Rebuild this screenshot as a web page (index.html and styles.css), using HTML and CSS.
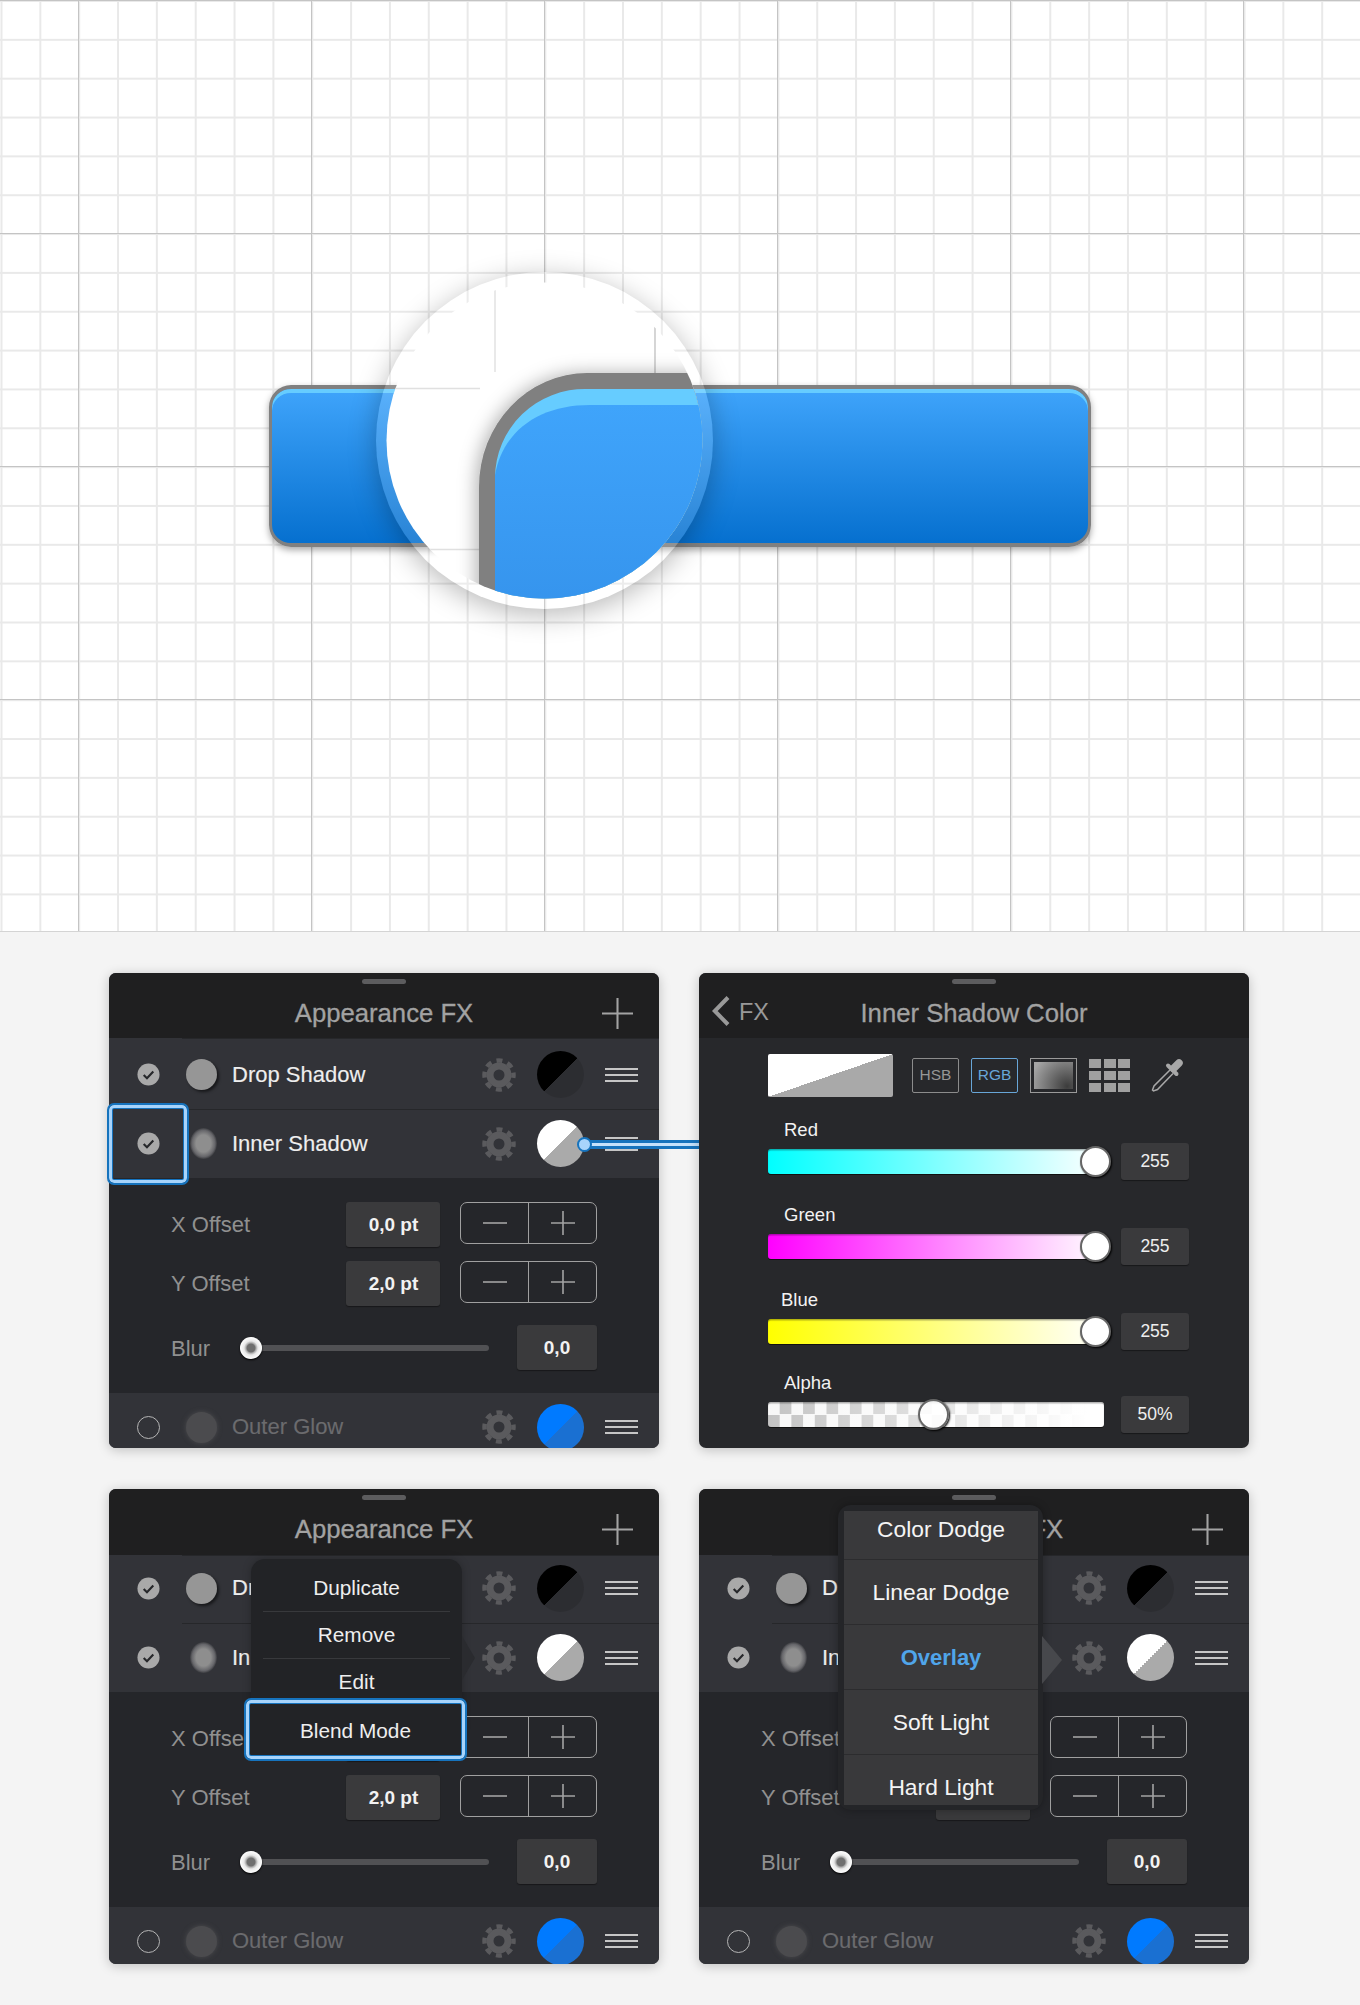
FILE: index.html
```html
<!DOCTYPE html>
<html>
<head>
    <title>Inner Shadow Button Tutorial</title>
    <link rel="stylesheet" href="styles.css">
</head>
<body>
    <svg class="sprite">
        <symbol id="gear" viewBox="0 0 34 34">
            <circle cx="17" cy="17" r="9" fill="none" stroke="#5a5a5d" stroke-width="7"/>
            <circle cx="17" cy="17" r="14.5" fill="none" stroke="#5a5a5d" stroke-width="4.5" stroke-dasharray="6 5.39" stroke-dashoffset="3"/>
        </symbol>
        <symbol id="check" viewBox="0 0 24 24">
            <circle cx="12" cy="12" r="11.5" fill="#a9a9a9"/>
            <path d="M7 12.5l3.4 3.4L17 8.8" fill="none" stroke="#26272a" stroke-width="2.2"/>
        </symbol>
        <symbol id="plus" viewBox="0 0 24 24">
            <path d="M12 0v24M0 12h24" fill="none" stroke="#a3a3a3" stroke-width="1.6"/>
        </symbol>
        <symbol id="minus" viewBox="0 0 24 24">
            <path d="M0 12h24" fill="none" stroke="#a3a3a3" stroke-width="1.6"/>
        </symbol>
    </svg>

    <!-- artboard with the zoomed button -->
    <section class="stage">
        <div class="big-button"></div>
        <div class="lens">
            <svg viewBox="376 272 337 337" width="337" height="337">
                <defs>
                    <clipPath id="lensClip"><circle cx="544.5" cy="440.5" r="158"/></clipPath>
                    <linearGradient id="lensBlue" x1="0" y1="0" x2="0" y2="1">
                        <stop offset="0" stop-color="#3fa4fb"/>
                        <stop offset="1" stop-color="#3593ec"/>
                    </linearGradient>
                    <filter id="lensShadow" x="-30%" y="-30%" width="160%" height="160%">
                        <feDropShadow dx="-3" dy="0" stdDeviation="9" flood-color="#000" flood-opacity="0.3"/>
                    </filter>
                </defs>
                <g clip-path="url(#lensClip)">
                    <rect x="376" y="272" width="337" height="337" fill="#fff"/>
                    <path d="M386 388.5H480M495 288V372M396 549.5H480" stroke="#e0e0e0" stroke-width="1.4"/>
                    <path d="M655 324V373" stroke="#c4c4c4" stroke-width="1.4"/>
                    <path d="M479 620V487A108 114 0 0 1 587 373H720V620Z" fill="#808080" filter="url(#lensShadow)"/>
                    <path d="M495 620V478A90 89 0 0 1 587 389H720V620Z" fill="#66ccff"/>
                    <path d="M495 620V475C503 430 540 405 590 405H720V620Z" fill="url(#lensBlue)"/>
                </g>
            </svg>
        </div>
    </section>

    <main class="boards">

        <!-- appearance panel, inner shadow selected -->
        <div class="panel">
            <div class="panel-head">
                <span class="grip"></span>
                <h2 class="panel-title">Appearance FX</h2>
                <svg class="head-plus"><use href="#plus"/></svg>
            </div>
            <div class="fx-row fx-row--first">
                <svg class="fx-check"><use href="#check"/></svg>
                <span class="fx-dot"></span>
                <span class="fx-label">Drop Shadow</span>
                <svg class="fx-gear"><use href="#gear"/></svg>
                <span class="fx-swatch fx-swatch--black"></span>
                <span class="fx-lines"></span>
            </div>
            <div class="fx-row fx-row--second">
                <svg class="fx-check"><use href="#check"/></svg>
                <span class="fx-dot fx-dot--inner"></span>
                <span class="fx-label">Inner Shadow</span>
                <svg class="fx-gear"><use href="#gear"/></svg>
                <span class="fx-swatch fx-swatch--white"></span>
                <span class="fx-lines"></span>
            </div>
            <div class="fx-detail">
                <div class="offset-row">
                    <span class="offset-label">X Offset</span>
                    <span class="value-box">0,0 pt</span>
                    <div class="stepper">
                        <span class="step"><svg class="step-icon"><use href="#minus"/></svg></span>
                        <span class="step"><svg class="step-icon"><use href="#plus"/></svg></span>
                    </div>
                </div>
                <div class="offset-row">
                    <span class="offset-label">Y Offset</span>
                    <span class="value-box">2,0 pt</span>
                    <div class="stepper">
                        <span class="step"><svg class="step-icon"><use href="#minus"/></svg></span>
                        <span class="step"><svg class="step-icon"><use href="#plus"/></svg></span>
                    </div>
                </div>
                <div class="blur-row">
                    <span class="blur-label">Blur</span>
                    <div class="blur-track"><span class="blur-thumb"></span></div>
                    <span class="value-box value-box--blur">0,0</span>
                </div>
            </div>
            <div class="foot-clip">
                <div class="fx-row fx-row--foot">
                    <span class="fx-check fx-check--off"></span>
                    <span class="fx-dot fx-dot--off"></span>
                    <span class="fx-label fx-label--off">Outer Glow</span>
                    <svg class="fx-gear"><use href="#gear"/></svg>
                    <span class="fx-swatch fx-swatch--blue"></span>
                    <span class="fx-lines"></span>
                </div>
            </div>
            <span class="focus-ring focus-ring--check"></span>
            <span class="link-line"></span>
            <span class="link-dot"></span>
        </div>

        <!-- color panel -->
        <div class="panel panel--color">
            <div class="panel-head">
                <span class="grip"></span>
                <a class="back-link" href="#">
                    <svg class="back-icon" viewBox="0 0 18 30"><path d="M16 1.500L2.800 15l13.200 13.500" fill="none" stroke="#999" stroke-width="4"/></svg>
                    <span>FX</span>
                </a>
                <h2 class="panel-title">Inner Shadow Color</h2>
            </div>
            <div class="color-body">
                <div class="color-tools">
                    <span class="color-preview"></span>
                    <span class="mode-btn">HSB</span>
                    <span class="mode-btn mode-btn--on">RGB</span>
                    <span class="mode-picker"><span class="mode-picker-fill"></span></span>
                    <span class="mode-grid">
                        <i></i><i></i><i></i><i></i><i></i><i></i><i></i><i></i><i></i>
                    </span>
                    <svg class="dropper" viewBox="0 0 35 35">
                        <path d="M24.500 10.500L30 5" stroke="#a8a8a8" stroke-width="7.500" stroke-linecap="round"/>
                        <path d="M19 7.500L27.500 16" stroke="#a8a8a8" stroke-width="4" stroke-linecap="round"/>
                        <path d="M21 12L5 28l-1.500 4 1 1 4-1.500L24 15.500" fill="none" stroke="#a8a8a8" stroke-width="1.500"/>
                    </svg>
                </div>

                <div class="channel">
                    <span class="channel-name">Red</span>
                    <div class="channel-row">
                        <div class="channel-track channel-track--red"><span class="channel-thumb"></span></div>
                        <span class="channel-value">255</span>
                    </div>
                </div>
                <div class="channel">
                    <span class="channel-name">Green</span>
                    <div class="channel-row">
                        <div class="channel-track channel-track--green"><span class="channel-thumb"></span></div>
                        <span class="channel-value">255</span>
                    </div>
                </div>
                <div class="channel channel--blue">
                    <span class="channel-name">Blue</span>
                    <div class="channel-row">
                        <div class="channel-track channel-track--blue"><span class="channel-thumb"></span></div>
                        <span class="channel-value">255</span>
                    </div>
                </div>
                <div class="channel">
                    <span class="channel-name">Alpha</span>
                    <div class="channel-row">
                        <div class="channel-track channel-track--alpha"><span class="channel-thumb channel-thumb--half"></span></div>
                        <span class="channel-value">50%</span>
                    </div>
                </div>
            </div>
        </div>

        <!-- appearance panel with context menu -->
        <div class="panel panel--low">
            <div class="panel-head">
                <span class="grip"></span>
                <h2 class="panel-title">Appearance FX</h2>
                <svg class="head-plus"><use href="#plus"/></svg>
            </div>
            <div class="fx-row fx-row--first">
                <svg class="fx-check"><use href="#check"/></svg>
                <span class="fx-dot"></span>
                <span class="fx-label">Drop Shadow</span>
                <svg class="fx-gear"><use href="#gear"/></svg>
                <span class="fx-swatch fx-swatch--black"></span>
                <span class="fx-lines"></span>
            </div>
            <div class="fx-row fx-row--second">
                <svg class="fx-check"><use href="#check"/></svg>
                <span class="fx-dot fx-dot--inner"></span>
                <span class="fx-label">Inner Shadow</span>
                <svg class="fx-gear"><use href="#gear"/></svg>
                <span class="fx-swatch fx-swatch--white"></span>
                <span class="fx-lines"></span>
            </div>
            <div class="fx-detail">
                <div class="offset-row">
                    <span class="offset-label">X Offset</span>
                    <span class="value-box">0,0 pt</span>
                    <div class="stepper">
                        <span class="step"><svg class="step-icon"><use href="#minus"/></svg></span>
                        <span class="step"><svg class="step-icon"><use href="#plus"/></svg></span>
                    </div>
                </div>
                <div class="offset-row">
                    <span class="offset-label">Y Offset</span>
                    <span class="value-box">2,0 pt</span>
                    <div class="stepper">
                        <span class="step"><svg class="step-icon"><use href="#minus"/></svg></span>
                        <span class="step"><svg class="step-icon"><use href="#plus"/></svg></span>
                    </div>
                </div>
                <div class="blur-row">
                    <span class="blur-label">Blur</span>
                    <div class="blur-track"><span class="blur-thumb"></span></div>
                    <span class="value-box value-box--blur">0,0</span>
                </div>
            </div>
            <div class="foot-clip">
                <div class="fx-row fx-row--foot">
                    <span class="fx-check fx-check--off"></span>
                    <span class="fx-dot fx-dot--off"></span>
                    <span class="fx-label fx-label--off">Outer Glow</span>
                    <svg class="fx-gear"><use href="#gear"/></svg>
                    <span class="fx-swatch fx-swatch--blue"></span>
                    <span class="fx-lines"></span>
                </div>
            </div>
            <div class="context-menu">
                <div class="context-item">Duplicate</div>
                <div class="context-item">Remove</div>
                <div class="context-item">Edit</div>
            </div>
            <div class="focus-ring focus-ring--menu">Blend Mode</div>
        </div>

        <!-- appearance panel with blend mode list -->
        <div class="panel panel--low">
            <div class="panel-head">
                <span class="grip"></span>
                <h2 class="panel-title">Appearance FX</h2>
                <svg class="head-plus"><use href="#plus"/></svg>
            </div>
            <div class="fx-row fx-row--first">
                <svg class="fx-check"><use href="#check"/></svg>
                <span class="fx-dot"></span>
                <span class="fx-label">Drop Shadow</span>
                <svg class="fx-gear"><use href="#gear"/></svg>
                <span class="fx-swatch fx-swatch--black"></span>
                <span class="fx-lines"></span>
            </div>
            <div class="fx-row fx-row--second">
                <svg class="fx-check"><use href="#check"/></svg>
                <span class="fx-dot fx-dot--inner"></span>
                <span class="fx-label">Inner Shadow</span>
                <svg class="fx-gear"><use href="#gear"/></svg>
                <span class="fx-swatch fx-swatch--white"></span>
                <span class="fx-lines"></span>
            </div>
            <div class="fx-detail">
                <div class="offset-row">
                    <span class="offset-label">X Offset</span>
                    <span class="value-box">0,0 pt</span>
                    <div class="stepper">
                        <span class="step"><svg class="step-icon"><use href="#minus"/></svg></span>
                        <span class="step"><svg class="step-icon"><use href="#plus"/></svg></span>
                    </div>
                </div>
                <div class="offset-row">
                    <span class="offset-label">Y Offset</span>
                    <span class="value-box">2,0 pt</span>
                    <div class="stepper">
                        <span class="step"><svg class="step-icon"><use href="#minus"/></svg></span>
                        <span class="step"><svg class="step-icon"><use href="#plus"/></svg></span>
                    </div>
                </div>
                <div class="blur-row">
                    <span class="blur-label">Blur</span>
                    <div class="blur-track"><span class="blur-thumb"></span></div>
                    <span class="value-box value-box--blur">0,0</span>
                </div>
            </div>
            <div class="foot-clip">
                <div class="fx-row fx-row--foot">
                    <span class="fx-check fx-check--off"></span>
                    <span class="fx-dot fx-dot--off"></span>
                    <span class="fx-label fx-label--off">Outer Glow</span>
                    <svg class="fx-gear"><use href="#gear"/></svg>
                    <span class="fx-swatch fx-swatch--blue"></span>
                    <span class="fx-lines"></span>
                </div>
            </div>
            <div class="blend-menu">
                <div class="blend-list">
                    <div class="blend-item blend-item--top">Color Dodge</div>
                    <div class="blend-item">Linear Dodge</div>
                    <div class="blend-item blend-item--on">Overlay</div>
                    <div class="blend-item">Soft Light</div>
                    <div class="blend-item">Hard Light</div>
                </div>
            </div>
        </div>

    </main>
</body>
</html>
```

FILE: styles.css
```css
* {
    box-sizing: border-box;
}
body {
    margin: 0;
    background-color: #f4f4f4;
    font-family: "Liberation Sans", Arial, sans-serif;
}
.sprite {
    display: none;
}

/* artboard */
.stage {
    position: relative;
    height: 932px;
    padding: 385px 0 0 269px;
    background-color: #fff;
    background-image:
        linear-gradient(90deg, #c4c4c4 1.5px, transparent 1.5px),
        linear-gradient(#c4c4c4 1.5px, transparent 1.5px),
        linear-gradient(90deg, #e9e9e9 1.5px, transparent 1.5px),
        linear-gradient(#e9e9e9 1.5px, transparent 1.5px);
    background-size: 233px 100%, 100% 233px, 38.85px 100%, 100% 38.85px;
    background-position: 78px 0, 0 0, 0.5px 0, 0 0;
    border-bottom: 1px solid #d4d4d4;
}
.big-button {
    width: 822px;
    height: 162px;
    border: solid #808080;
    border-width: 4px 3px;
    border-radius: 22px;
    background: linear-gradient(#3fa4fb, #0670cf);
    box-shadow: inset 0 4px 0 #66ccff, 0 3px 7px rgba(0, 0, 0, 0.35);
}
.lens {
    position: absolute;
    left: 376px;
    top: 272px;
    width: 337px;
    height: 337px;
    border-radius: 50%;
    background-color: rgba(255, 255, 255, 0.14);
    box-shadow: 0 6px 28px rgba(0, 0, 0, 0.28);
}
.lens svg {
    display: block;
}

/* panels */
.boards {
    display: grid;
    grid-template-columns: 550px 550px;
    grid-auto-rows: 475px;
    column-gap: 40px;
    row-gap: 41px;
    padding: 41px 0 41px 109px;
}
.panel {
    position: relative;
    display: flex;
    flex-direction: column;
    border-radius: 7px;
    background-color: #25262a;
    box-shadow: 0 2px 12px rgba(0, 0, 0, 0.22);
}
.panel-head {
    position: relative;
    flex: none;
    height: 65px;
    border-radius: 7px 7px 0 0;
    background-color: #1f1f20;
}
.panel--low .panel-head {
    height: 66px;
}
.grip {
    position: absolute;
    left: 253px;
    top: 6px;
    width: 44px;
    height: 5px;
    border-radius: 3px;
    background-color: #5c5c5e;
}
.panel-title {
    margin: 0;
    font-size: 25.7px;
    font-weight: normal;
    line-height: 80px;
    text-align: center;
    color: #a2a2a2;
    -webkit-text-stroke: 0.3px #a2a2a2;
}
.head-plus {
    position: absolute;
    left: 493px;
    top: 25px;
    width: 31px;
    height: 31px;
}

/* effect rows */
.fx-row {
    position: relative;
    flex: none;
    display: flex;
    align-items: center;
    padding-left: 28px;
    background-color: #323338;
    color: #eee;
}
.fx-row::before {
    content: "";
    position: absolute;
    left: 73px;
    right: 0;
    top: 0;
    height: 1px;
    background-color: #26272a;
}
.fx-row--first {
    height: 71px;
    padding-top: 2px;
}
.fx-row--second {
    height: 69px;
}
.panel--low .fx-row--first {
    height: 68px;
    padding-top: 0;
    padding-bottom: 2px;
}
.fx-row--foot {
    height: 68px;
}
.fx-row--foot::before {
    display: none;
}
.foot-clip {
    flex: none;
    height: 55px;
    overflow: hidden;
    border-radius: 0 0 7px 7px;
}
.panel--low .foot-clip {
    height: 57px;
}
.fx-check {
    flex: none;
    width: 23px;
    height: 23px;
}
.fx-check--off {
    border: 1.5px solid #b5b5b5;
    border-radius: 50%;
}
.fx-dot {
    flex: none;
    width: 31px;
    height: 31px;
    margin: 0 15px 0 26px;
    border-radius: 50%;
    background-color: #969696;
    box-shadow: 2px 2px 3px rgba(0, 0, 0, 0.55);
}
.fx-dot--inner {
    width: 27px;
    margin: 0 15px 0 30px;
    background: radial-gradient(closest-side, #8e8e8e 55%, #66666a 85%, #3c3d41 100%);
    box-shadow: none;
}
.fx-dot--off {
    background-color: #4b4b4e;
    box-shadow: 0 0 5px #4b4b4e;
}
.fx-label {
    flex: 1;
    font-size: 22px;
    -webkit-text-stroke: 0.15px;
}
.fx-label--off {
    color: #6b6b6e;
}
.fx-gear {
    flex: none;
    width: 34px;
    height: 34px;
}
.fx-swatch {
    flex: none;
    width: 47px;
    height: 47px;
    margin: 0 21px;
    border-radius: 50%;
}
.fx-swatch--black {
    background: linear-gradient(135deg, #000 50%, #2c2d31 50%);
}
.fx-swatch--white {
    background: linear-gradient(135deg, #fff 50%, #aaa 50%);
}
.fx-swatch--blue {
    background: linear-gradient(135deg, #007aff 50%, #1a70d2 50%);
}
.fx-lines {
    flex: none;
    width: 33px;
    height: 14px;
    margin-right: 21px;
    border-top: 2px solid #c6c6c6;
    border-bottom: 2px solid #c6c6c6;
    background: linear-gradient(#c6c6c6, #c6c6c6) center / 100% 2px no-repeat;
}

/* offset and blur controls */
.fx-detail {
    flex: 1;
    padding: 24px 62px 0;
}
.offset-row {
    display: flex;
    align-items: flex-start;
    height: 46px;
    margin-bottom: 13px;
}
.offset-label {
    width: 176px;
    font-size: 22px;
    line-height: 46px;
    color: #909090;
}
.value-box {
    flex: none;
    width: 94px;
    height: 45px;
    margin-right: 20px;
    border-radius: 3px;
    background-color: #3a3a3c;
    box-shadow: 0 1px 1px #18181a;
    font-size: 19px;
    font-weight: bold;
    line-height: 45px;
    text-align: center;
    color: #f2f2f2;
}
.stepper {
    display: flex;
    width: 137px;
    height: 42px;
    border: 1.5px solid #a0a0a0;
    border-radius: 7px;
}
.step {
    flex: 1;
    display: flex;
    align-items: center;
    justify-content: center;
}
.step + .step {
    border-left: 1.5px solid #a0a0a0;
}
.step-icon {
    width: 24px;
    height: 24px;
}
.blur-row {
    display: flex;
    align-items: center;
    height: 45px;
    margin-top: 18px;
}
.blur-label {
    width: 69px;
    padding-top: 2px;
    font-size: 22px;
    color: #909090;
}
.blur-track {
    position: relative;
    width: 249px;
    height: 6px;
    margin-right: 28px;
    border-radius: 3px;
    background-color: #515154;
}
.blur-thumb {
    position: absolute;
    left: 0;
    top: -8px;
    width: 22px;
    height: 22px;
    border-radius: 50%;
    background: radial-gradient(#6e6e6e 4px, #a8a8a8 5px, #e8e8e8 7px, #fff 11px);
    box-shadow: 0 1px 2px #000;
}
.value-box--blur {
    width: 80px;
    margin-right: 0;
}

/* callouts */
.focus-ring {
    position: absolute;
    border: 2px solid #1673bd;
    border-radius: 7px;
    box-shadow: inset 0 0 0 3px #a8d4fb, inset 0 0 0 4px #1673bd;
}
.focus-ring--check {
    left: -2px;
    top: 130px;
    width: 82px;
    height: 82px;
}
.focus-ring--menu {
    left: 135px;
    top: 209px;
    width: 223px;
    height: 63px;
    background-color: #222326;
    font-size: 20.8px;
    line-height: 61px;
    text-align: center;
    color: #eee;
}
.link-line {
    position: absolute;
    left: 476px;
    top: 167px;
    width: 114px;
    height: 9px;
    border: solid #1673bd;
    border-width: 3px 0;
    background-color: #c4e1fb;
}
.link-dot {
    position: absolute;
    left: 468px;
    top: 164px;
    width: 15px;
    height: 15px;
    border: 2px solid #1673bd;
    border-radius: 50%;
    background-color: #a8d4fb;
}

/* context menu */
.context-menu {
    position: absolute;
    left: 142px;
    top: 70px;
    width: 211px;
    height: 180px;
    padding: 6px 12px 0;
    border-radius: 14px;
    background-color: #222326;
    box-shadow: 0 0 8px rgba(0, 0, 0, 0.25);
}
.context-menu::after {
    content: "";
    position: absolute;
    left: 100%;
    top: 77px;
    border-left: 13px solid #2a2b2f;
    border-top: 22px solid transparent;
    border-bottom: 22px solid transparent;
}
.context-item {
    height: 47px;
    border-bottom: 1px solid #38393c;
    font-size: 20.8px;
    line-height: 46px;
    text-align: center;
    color: #eee;
}
.context-item:last-child {
    border-bottom: none;
}

/* blend mode list */
.blend-menu {
    position: absolute;
    left: 139px;
    top: 16px;
    width: 205px;
    height: 305px;
    padding: 6px 5px 5px 6px;
    border-radius: 13px;
    background-color: #242528;
    box-shadow: 0 0 8px rgba(0, 0, 0, 0.3);
}
.blend-menu::after {
    content: "";
    position: absolute;
    left: 100%;
    top: 131px;
    border-left: 20px solid #47484c;
    border-top: 24px solid transparent;
    border-bottom: 24px solid transparent;
    margin-left: -1px;
}
.blend-list {
    height: 100%;
    overflow: hidden;
    background-color: #39393b;
}
.blend-item {
    height: 65px;
    border-bottom: 1px solid #2c2c2e;
    font-size: 22.8px;
    line-height: 65px;
    text-align: center;
    color: #f4f4f4;
}
.blend-item--top {
    height: 49px;
    line-height: 36px;
}
.blend-item--on {
    font-weight: bold;
    color: #50a5ea;
    font-size: 22px;
}

/* color panel */
.panel--color {
    background-color: #27282b;
}
.back-link {
    position: absolute;
    left: 13px;
    top: 23px;
    display: flex;
    align-items: center;
    gap: 9px;
    font-size: 23.5px;
    text-decoration: none;
    color: #999;
}
.back-link span {
    padding-top: 2px;
}
.back-icon {
    width: 18px;
    height: 30px;
}
.color-body {
    padding: 16px 0 0 69px;
}
.color-tools {
    display: flex;
    align-items: center;
    gap: 12px;
    height: 43px;
    margin-bottom: 21px;
}
.color-preview {
    width: 125px;
    height: 43px;
    margin-right: 7px;
    border-radius: 2px;
    background: linear-gradient(to top left, #a9a9a9 50%, #fff 50%);
}
.mode-btn {
    width: 47px;
    height: 35px;
    border: 1.5px solid #8c8c8c;
    border-radius: 2px;
    font-size: 15.5px;
    line-height: 32px;
    text-align: center;
    color: #969696;
}
.mode-btn--on {
    border-color: #68a6d8;
    color: #68a6d8;
}
.mode-picker {
    width: 47px;
    height: 35px;
    padding: 3px;
    border: 1.5px solid #9a9a9a;
}
.mode-picker-fill {
    display: block;
    height: 100%;
    background: radial-gradient(circle at 85% 90%, #3c3c3c, #a5a5a5 90%);
}
.mode-grid {
    display: grid;
    grid-template-columns: repeat(3, 12px);
    grid-auto-rows: 9.500px;
    gap: 2.500px 2.500px;
}
.mode-grid i {
    background-color: #a0a0a0;
}
.dropper {
    width: 35px;
    height: 35px;
    margin-left: 7px;
}
.channel {
    margin-bottom: 23px;
}
.channel--blue {
    margin-bottom: 21px;
}
.channel-name {
    display: block;
    height: 24px;
    padding-left: 16px;
    font-size: 18.5px;
    line-height: 23px;
    color: #f2f2f2;
}
.channel--blue .channel-name {
    padding-left: 13px;
}
.channel-row {
    display: flex;
    align-items: center;
    gap: 17px;
    margin-top: 1px;
}
.channel-track {
    position: relative;
    width: 336px;
    height: 25px;
    border-radius: 3px;
    box-shadow: inset 0 1.5px 1px rgba(0, 0, 0, 0.3), 0 1px 0 #111;
}
.channel-track--red {
    background-image: linear-gradient(90deg, #00ffff, #fff);
}
.channel-track--green {
    background-image: linear-gradient(90deg, #ff00ff, #fff);
}
.channel-track--blue {
    background-image: linear-gradient(90deg, #ffff00, #fff);
}
.channel-track--alpha {
    background-image:
        linear-gradient(90deg, rgba(255, 255, 255, 0.1), #fff 95%),
        conic-gradient(#bdbdbd 25%, #f7f7f7 0 50%, #bdbdbd 0 75%, #f7f7f7 0);
    background-size: 100% 100%, 23.4px 25px;
}
.channel-thumb {
    position: absolute;
    right: -7px;
    top: -3px;
    width: 31px;
    height: 31px;
    border: 2px solid #666;
    border-radius: 50%;
    background-color: #fff;
    box-shadow: 1px 1px 2px #000;
}
.channel-thumb--half {
    left: 150px;
    right: auto;
    background-color: rgba(255, 255, 255, 0.85);
}
.channel-value {
    width: 68px;
    height: 37px;
    border-radius: 3px;
    background-color: #3a3a3c;
    box-shadow: 0 1px 1px #18181a;
    font-size: 17.500px;
    line-height: 37px;
    text-align: center;
    color: #eee;
}
```
